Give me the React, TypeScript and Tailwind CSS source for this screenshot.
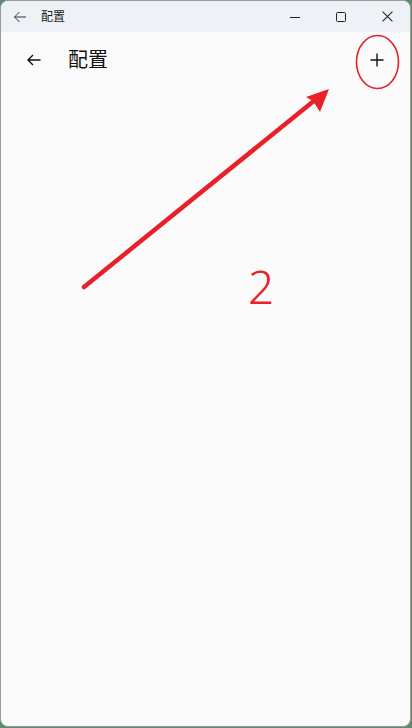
import React from "react";

export default function App() {
  return (
    <div className="w-[412px] h-[728px] bg-[#5d8a6c] overflow-hidden" style={{ fontFamily: '"Noto Sans", "Noto Sans CJK SC", sans-serif' }}>
      <div className="relative w-[411px] h-[727px] rounded-[8px] border border-[#9a9a9a] bg-[#fafafa] overflow-hidden flex flex-col">
        {/* title bar */}
        <div className="h-[31px] bg-[#eef2f7] flex items-center shrink-0">
          <div className="w-[36px] flex justify-center pl-[1px]">
            <svg width="16" height="16" viewBox="0 0 16 16" fill="none" stroke="#333" strokeWidth="1">
              <path d="M14 8H2.5M7.5 3L2.5 8l5 5" />
            </svg>
          </div>
          <span className="text-[12px] text-[#1a1a1a] ml-[4px]">配置</span>
          <div className="ml-auto flex items-center h-full">
            <div className="w-[46px] flex justify-center">
              <svg width="10" height="10" viewBox="0 0 10 10"><path d="M0 5.5h10" stroke="#222" strokeWidth="1" /></svg>
            </div>
            <div className="w-[46px] flex justify-center">
              <svg width="10" height="10" viewBox="0 0 10 10"><rect x="0.5" y="0.5" width="9" height="9" rx="1" fill="none" stroke="#222" strokeWidth="1" /></svg>
            </div>
            <div className="w-[46px] flex justify-center">
              <svg width="11" height="11" viewBox="0 0 10 10"><path d="M0.5 0.5l9 9M9.5 0.5l-9 9" stroke="#222" strokeWidth="1" /></svg>
            </div>
          </div>
        </div>
        {/* page header */}
        <div className="h-[56px] flex items-center shrink-0">
          <div className="w-[67px] flex justify-center pr-[2px]">
            <svg width="16" height="16" viewBox="0 0 16 16" fill="none" stroke="#111" strokeWidth="1.4">
              <path d="M14.5 8H2M7 3L2 8l5 5" />
            </svg>
          </div>
          <span className="text-[20px] text-[#111] leading-none">配置</span>
          <div className="ml-auto w-[66px] flex justify-center">
            <svg width="14" height="14" viewBox="0 0 14 14" stroke="#111" strokeWidth="1.4">
              <path d="M7 0.5v13M0.5 7h13" />
            </svg>
          </div>
        </div>
        <div className="flex-1" />

        {/* annotations overlay */}
        <svg className="absolute left-0 top-0 pointer-events-none" width="412" height="728" viewBox="0 0 412 728">
          <ellipse cx="376.5" cy="61" rx="21" ry="26.5" fill="none" stroke="#e5202b" strokeWidth="1.6" />
          <line x1="83" y1="286" x2="314" y2="99" stroke="#e8202a" strokeWidth="4.5" strokeLinecap="round" />
          <path d="M328 88 L305 96 L312 100 L319 111 Z" fill="#e8202a" />
        </svg>
        <span className="absolute left-[247px] top-[262px] text-[46px] leading-none text-[#e8202a] font-light">2</span>
      </div>
    </div>
  );
}
